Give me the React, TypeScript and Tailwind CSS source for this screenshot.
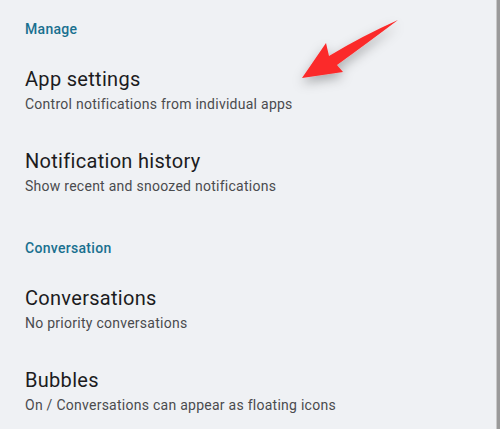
import React from 'react';

type Item = { title: string; sub: string };

const sections: { label: string; items: Item[] }[] = [
  {
    label: 'Manage',
    items: [
      { title: 'App settings', sub: 'Control notifications from individual apps' },
      { title: 'Notification history', sub: 'Show recent and snoozed notifications' },
    ],
  },
  {
    label: 'Conversation',
    items: [
      { title: 'Conversations', sub: 'No priority conversations' },
      { title: 'Bubbles', sub: 'On / Conversations can appear as floating icons' },
    ],
  },
];

function Arrow() {
  return (
    <svg className="absolute left-0 top-0 pointer-events-none" width="500" height="140" viewBox="0 0 500 140">
      <defs>
        <filter id="shadow" x="-50%" y="-50%" width="200%" height="200%">
          <feDropShadow dx="0" dy="5" stdDeviation="6" floodColor="#000" floodOpacity="0.3" />
        </filter>
      </defs>
      <path
        d="M302 78 L326 43 L329 56 Q362 36 398 20 Q366 44 337 65 L343 72 Z"
        fill="#fb2a2a"
        filter="url(#shadow)"
      />
    </svg>
  );
}

export default function App() {
  return (
    <div className="relative flex h-[429px] w-[500px] overflow-hidden bg-[#eff1f4] font-['Roboto',sans-serif]">
      <div className="flex-1 pt-[19px]">
        {sections.map((s, si) => (
          <div key={s.label} className={si > 0 ? 'mt-6' : ''}>
            <div className="px-[25px] pb-[11px] text-[14px] leading-[20px] font-medium tracking-[0.3px] text-[#19708f]">
              {s.label}
            </div>
            {s.items.map((it) => (
              <div key={it.title} className="px-[25px] py-4">
                <div className="text-[20px] leading-[26px] tracking-[0.3px] text-[#1c1c1e]">{it.title}</div>
                <div className="text-[14px] leading-[24px] tracking-[0.26px] text-[#4a4b4e]">{it.sub}</div>
              </div>
            ))}
          </div>
        ))}
      </div>
      <div className="w-px bg-[#c9c9c9]" />
      <div className="w-[3px] bg-[#9a9a9a]" />
      <Arrow />
    </div>
  );
}
